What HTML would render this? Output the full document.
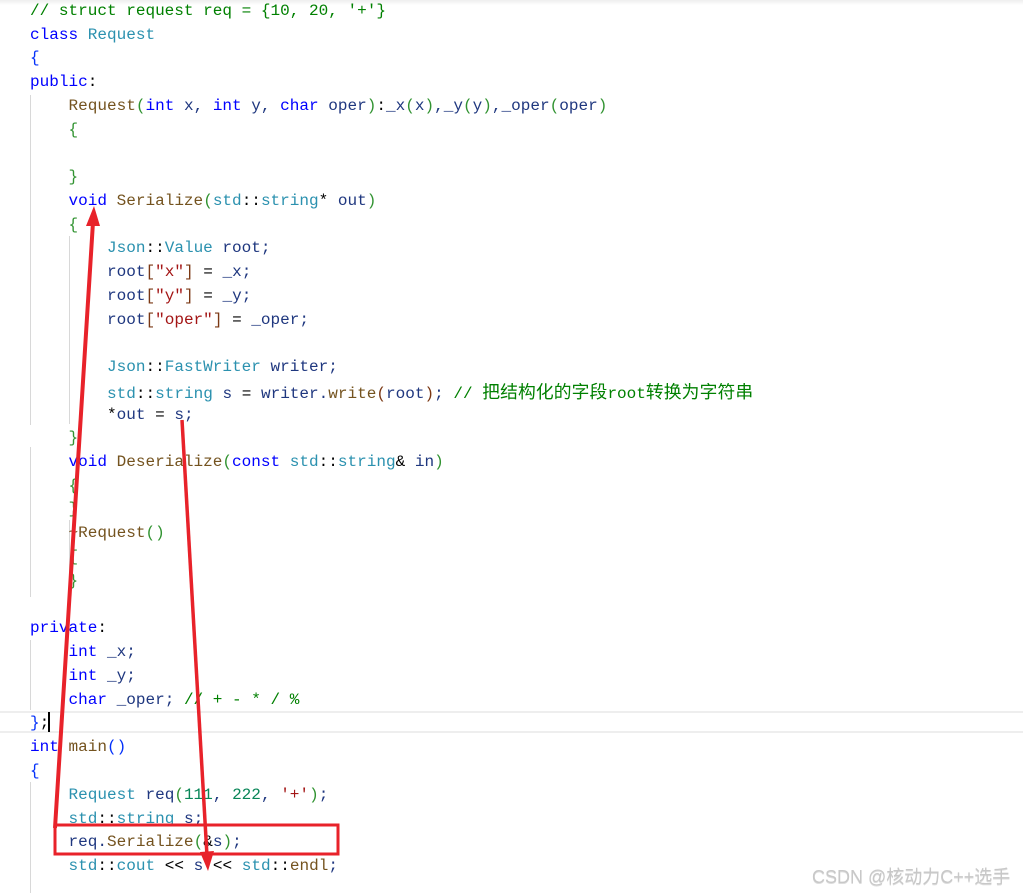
<!DOCTYPE html>
<html><head><meta charset="utf-8"><style>
html,body{margin:0;padding:0;background:#fff;width:1023px;height:893px;overflow:hidden;position:relative}
.l{position:absolute;left:30px;height:24px;line-height:24px;white-space:pre;font-family:"Liberation Mono","Noto Sans CJK SC",monospace;font-size:16.05px;color:#1f377f}
.k{color:#0000ff}.t{color:#2b91af}.f{color:#74531f}.s{color:#a31515}.c{color:#008000}.n{color:#098658}
.b1{color:#0431fa}.b2{color:#319331}.b3{color:#7b3814}.o{color:#000}
.g{position:absolute;width:1px;background:#d8d8d8}
.cjk{font-family:"Noto Sans CJK SC",sans-serif;font-size:17.8px;letter-spacing:0.1px}
</style></head><body>
<div style="position:absolute;left:0;top:0;width:1023px;height:5px;background:linear-gradient(#eee,#fff)"></div>
<div style="position:absolute;left:0;top:711px;width:1023px;height:22px;border-top:2px solid #eee;border-bottom:2px solid #eee;box-sizing:border-box"></div>
<div class="g" style="left:30px;top:95px;height:330px"></div>
<div class="g" style="left:30px;top:447px;height:150px"></div>
<div class="g" style="left:30px;top:640px;height:70px"></div>
<div class="g" style="left:30px;top:782px;height:111px"></div>
<div class="g" style="left:69px;top:236px;height:188px"></div>
<div class="g" style="left:69px;top:520px;height:60px"></div>

<div class="l" style="top:-1px"><span class="c">// struct request req = {10, 20, '+'}</span></div>
<div class="l" style="top:23px"><span class="k">class</span> <span class="t">Request</span></div>
<div class="l" style="top:46px"><span class="b1">{</span></div>
<div class="l" style="top:70px"><span class="k">public</span><span class="o">:</span></div>
<div class="l" style="top:94px">    <span class="f">Request</span><span class="b2">(</span><span class="k">int</span> x, <span class="k">int</span> y, <span class="k">char</span> oper<span class="b2">)</span><span class="o">:</span>_x<span class="b2">(</span>x<span class="b2">)</span>,_y<span class="b2">(</span>y<span class="b2">)</span>,_oper<span class="b2">(</span>oper<span class="b2">)</span></div>
<div class="l" style="top:118px">    <span class="b2">{</span></div>
<div class="l" style="top:165px">    <span class="b2">}</span></div>
<div class="l" style="top:189px">    <span class="k">void</span> <span class="f">Serialize</span><span class="b2">(</span><span class="t">std</span><span class="o">::</span><span class="t">string</span><span class="o">*</span> out<span class="b2">)</span></div>
<div class="l" style="top:213px">    <span class="b2">{</span></div>
<div class="l" style="top:236px">        <span class="t">Json</span><span class="o">::</span><span class="t">Value</span> root;</div>
<div class="l" style="top:260px">        root<span class="b3">[</span><span class="s">"x"</span><span class="b3">]</span> <span class="o">=</span> _x;</div>
<div class="l" style="top:284px">        root<span class="b3">[</span><span class="s">"y"</span><span class="b3">]</span> <span class="o">=</span> _y;</div>
<div class="l" style="top:308px">        root<span class="b3">[</span><span class="s">"oper"</span><span class="b3">]</span> <span class="o">=</span> _oper;</div>
<div class="l" style="top:355px">        <span class="t">Json</span><span class="o">::</span><span class="t">FastWriter</span> writer;</div>
<div class="l" style="top:379px">        <span class="t">std</span><span class="o">::</span><span class="t">string</span> s <span class="o">=</span> writer.<span class="f">write</span><span class="b3">(</span>root<span class="b3">)</span>; <span class="c">// <span class="cjk">把结构化的字段</span>root<span class="cjk">转换为字符串</span></span></div>
<div class="l" style="top:403px">        <span class="o">*</span>out <span class="o">=</span> s;</div>
<div class="l" style="top:426px">    <span class="b2">}</span></div>
<div class="l" style="top:450px">    <span class="k">void</span> <span class="f">Deserialize</span><span class="b2">(</span><span class="k">const</span> <span class="t">std</span><span class="o">::</span><span class="t">string</span><span class="o">&amp;</span> in<span class="b2">)</span></div>
<div class="l" style="top:474px">    <span class="b2">{</span></div>
<div class="l" style="top:497px">    <span class="b2">}</span></div>
<div class="l" style="top:521px">    <span class="f">~Request</span><span class="b2">()</span></div>
<div class="l" style="top:545px">    <span class="b2">{</span></div>
<div class="l" style="top:569px">    <span class="b2">}</span></div>
<div class="l" style="top:616px"><span class="k">private</span><span class="o">:</span></div>
<div class="l" style="top:640px">    <span class="k">int</span> _x;</div>
<div class="l" style="top:664px">    <span class="k">int</span> _y;</div>
<div class="l" style="top:688px">    <span class="k">char</span> _oper; <span class="c">// + - * / %</span></div>
<div class="l" style="top:711px"><span class="b1">}</span><span class="o">;</span></div>
<div style="position:absolute;left:48px;top:712px;width:2px;height:20px;background:#000"></div>
<div class="l" style="top:735px"><span class="k">int</span> <span class="f">main</span><span class="b1">()</span></div>
<div class="l" style="top:759px"><span class="b1">{</span></div>
<div class="l" style="top:783px">    <span class="t">Request</span> req<span class="b2">(</span><span class="n">111</span>, <span class="n">222</span>, <span class="s">'+'</span><span class="b2">)</span>;</div>
<div class="l" style="top:807px">    <span class="t">std</span><span class="o">::</span><span class="t">string</span> s;</div>
<div class="l" style="top:830px">    req.<span class="f">Serialize</span><span class="b2">(</span><span class="o">&amp;</span>s<span class="b2">)</span>;</div>
<div class="l" style="top:854px">    <span class="t">std</span><span class="o">::</span><span class="t">cout</span> <span class="o">&lt;&lt;</span> s <span class="o">&lt;&lt;</span> <span class="t">std</span><span class="o">::</span><span class="f">endl</span>;</div>

<svg style="position:absolute;left:0;top:0" width="1023" height="893">
<rect x="55" y="825" width="283" height="29" fill="none" stroke="#e8222a" stroke-width="3"/>
<line x1="55" y1="828" x2="93" y2="222" stroke="#e8222a" stroke-width="4"/>
<polygon points="94,206 86,226 100,226" fill="#e8222a"/>
<line x1="182" y1="420" x2="207" y2="856" stroke="#e8222a" stroke-width="3.5"/>
<polygon points="208,871 200,852 214,851" fill="#e8222a"/>
</svg>
<div style="position:absolute;left:812px;top:863px;font-family:'Liberation Sans','Noto Sans CJK SC',sans-serif;font-size:18px;color:#c8c8c8;white-space:nowrap;text-shadow:0 1px 0 #ddd">CSDN @核动力C++选手</div>
</body></html>
